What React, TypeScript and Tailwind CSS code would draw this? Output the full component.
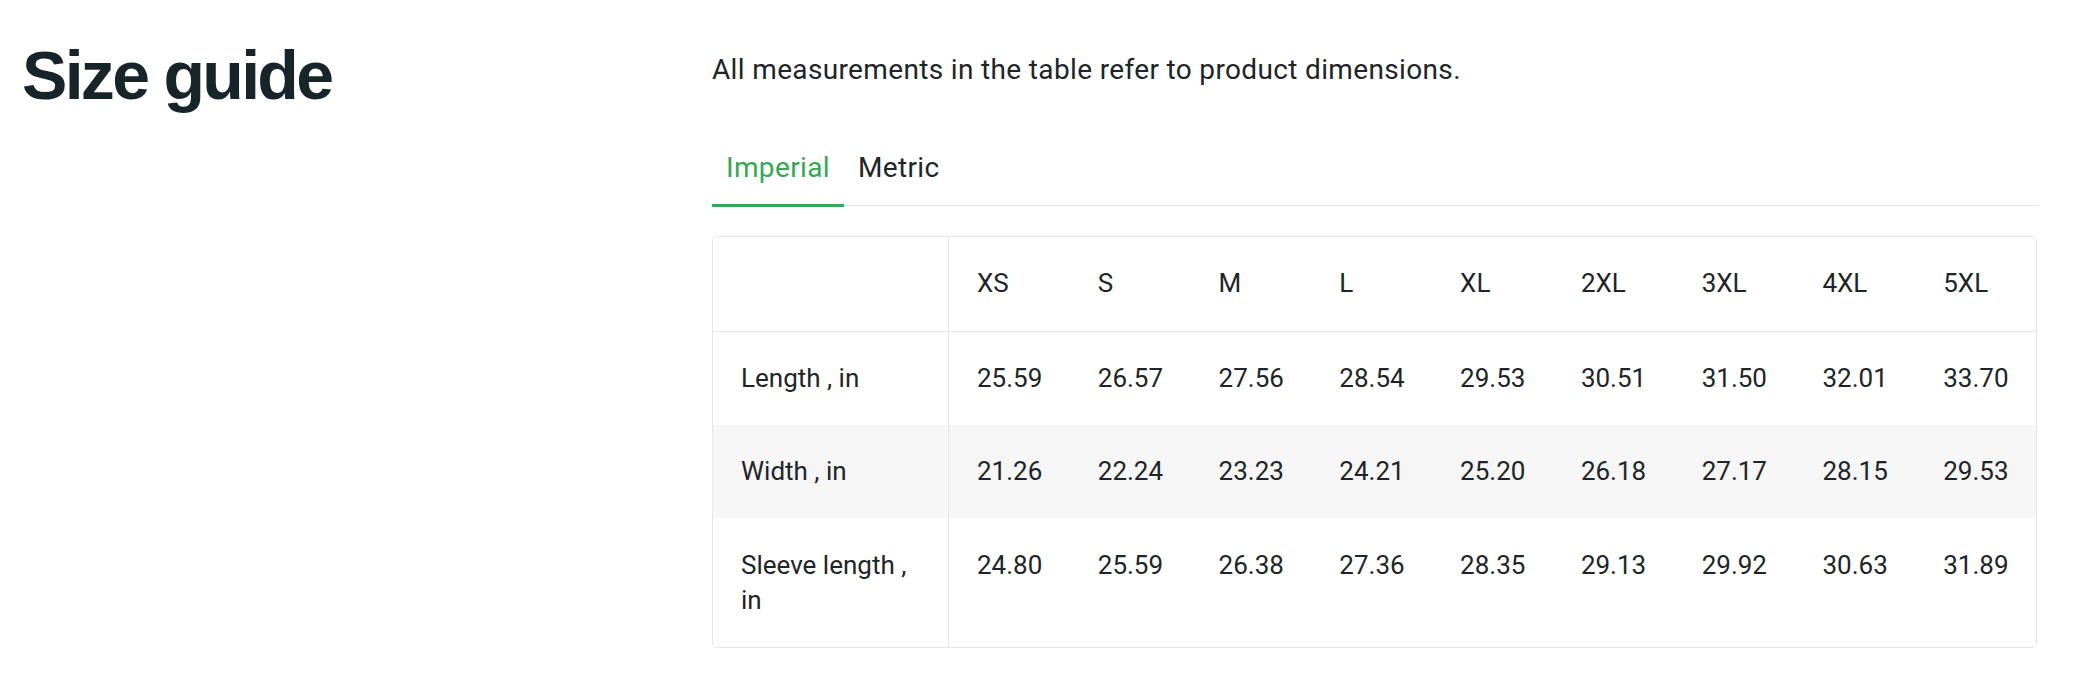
import React from "react";

const sizes = ["XS", "S", "M", "L", "XL", "2XL", "3XL", "4XL", "5XL"];
const rows: { label: string; values: string[] }[] = [
  { label: "Length , in", values: ["25.59", "26.57", "27.56", "28.54", "29.53", "30.51", "31.50", "32.01", "33.70"] },
  { label: "Width , in", values: ["21.26", "22.24", "23.23", "24.21", "25.20", "26.18", "27.17", "28.15", "29.53"] },
  { label: "Sleeve length , in", values: ["24.80", "25.59", "26.38", "27.36", "28.35", "29.13", "29.92", "30.63", "31.89"] },
];

export default function App() {
  return (
    <div
      className="flex min-h-[696px] w-[2086px] bg-white text-[#1d2528]"
      style={{ fontFamily: "Roboto, 'Noto Sans', sans-serif" }}
    >
      <div className="w-[712px] shrink-0 pl-[22px] pt-[41px]">
        <h1
          className="text-[68px] leading-[68px] font-bold tracking-[-2.7px] text-[#17252b]"
          style={{ fontFamily: "'Liberation Sans', Arial, sans-serif" }}
        >
          Size guide
        </h1>
      </div>

      <div className="w-[1325px] shrink-0 pt-[50px]">
        <p className="text-[28px] leading-[40px] tracking-[0.35px]">
          All measurements in the table refer to product dimensions.
        </p>

        <div className="mt-[58px] flex border-b border-[#e6e6e6]">
          <button className="-mb-[2px] border-b-[3px] border-[#34a853] px-[14px] pb-[16px] text-[28px] leading-[40px] tracking-[0.35px] text-[#34a853]">
            Imperial
          </button>
          <button className="-mb-[2px] border-b-[3px] border-transparent px-[14px] pb-[16px] text-[28px] leading-[40px] tracking-[0.35px] text-[#1d2528]">
            Metric
          </button>
        </div>

        <div className="mt-[30px] overflow-hidden rounded-[5px] border border-[#e6e6e6] text-[26px] leading-[35px]">
          <div className="grid grid-cols-[236px_repeat(9,minmax(0,1fr))] border-b border-[#e6e6e6]">
            <div className="border-r border-[#e6e6e6] px-[28px] pt-[29px] pb-[30px]"></div>
            {sizes.map((s) => (
              <div key={s} className="px-[28px] pt-[29px] pb-[30px]">
                {s}
              </div>
            ))}
          </div>
          {rows.map((r, i) => (
            <div
              key={r.label}
              className={
                "grid grid-cols-[236px_repeat(9,minmax(0,1fr))] " +
                (i === 1 ? "bg-[#f6f6f6]" : "bg-white")
              }
            >
              <div
                className={
                  "border-r border-[#e6e6e6] px-[28px] pb-[29px] " + (i === 2 ? "pt-[30px]" : "pt-[29px]")
                }
              >
                {r.label}
              </div>
              {r.values.map((v, j) => (
                <div key={j} className={"px-[28px] pb-[29px] " + (i === 2 ? "pt-[30px]" : "pt-[29px]")}>
                  {v}
                </div>
              ))}
            </div>
          ))}
        </div>
      </div>
    </div>
  );
}
